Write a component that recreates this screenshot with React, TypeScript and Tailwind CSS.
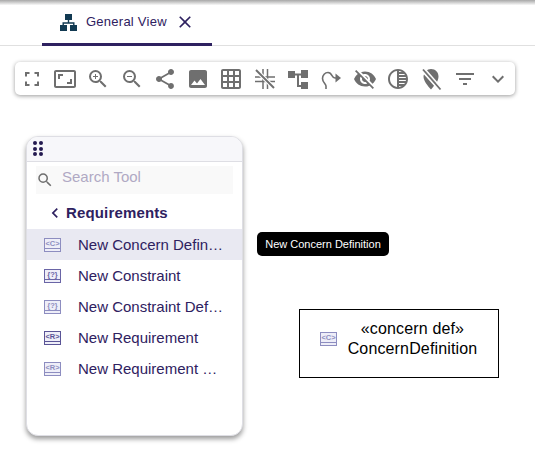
import React from 'react';
import {
  MdAspectRatio, MdZoomIn, MdZoomOut, MdShare, MdImage, MdGridOn, MdVisibilityOff, MdTonality,
  MdExpandMore, MdSearch, MdChevronLeft, MdClose, MdFilterList,
} from 'react-icons/md';

const iconClass = 'w-6 h-6 text-[#6f6f6f]';

function CornersIcon() {
  return (
    <svg viewBox="0 0 24 24" className={iconClass} fill="none" stroke="currentColor" strokeWidth="2">
      <path d="M6 9.500V6h3.500M14.500 6H18v3.500M18 14.500V18h-3.500M9.500 18H6v-3.500" />
    </svg>
  );
}

function ArrangeIcon() {
  return (
    <svg viewBox="0 0 24 24" className={iconClass} fill="none" stroke="currentColor" strokeWidth="1.500">
      <path d="M10 2v20M14.500 2v20M2 10h20M2 14.500h20" />
      <path d="M3 3l18 18" stroke="white" strokeWidth="4" />
      <path d="M3 3l18 18" strokeWidth="2" />
    </svg>
  );
}

function TreeIcon() {
  return (
    <svg viewBox="0 0 24 24" className={iconClass} fill="currentColor">
      <path d="M2 4h7v7H2zM15 3h7v8h-7zM15 15h7v7h-7zM9 6.500h6v2H9zM11 8h2v10h2v2h-4z" />
    </svg>
  );
}

function RouteIcon() {
  return (
    <svg viewBox="0 0 24 24" className={iconClass} fill="none" stroke="currentColor" strokeWidth="1.600">
      <path d="M7 22v-3c0-2-3.500-3.500-3.500-7.500C3.500 8 6 5.500 9 5.500c4.500 0 3.500 5.500 7 5.500h2" />
      <path d="M16.500 6.500L22 11l-5.500 4.500z" fill="currentColor" stroke="none" />
    </svg>
  );
}

function PinOffIcon() {
  return (
    <svg viewBox="0 0 24 24" className={iconClass} fill="currentColor">
      <path d="M12 2c4.500 0 7.500 3.200 7.500 7.500 0 2.500-1 4.800-2.300 6.800L7 4.200C8.300 2.800 10 2 12 2zM5 7.500l10 11.200c-1 1.300-2 2.500-3 3.800-3.500-4-7.500-8.500-7.500-13 0-.7.200-1.400.500-2z" />
      <path d="M5.500 1.500l17.500 20" stroke="white" strokeWidth="1.500" />
      <path d="M4 2.500l17.500 20" stroke="currentColor" strokeWidth="1.800" />
    </svg>
  );
}

function SitemapIcon() {
  return (
    <svg viewBox="0 0 17 17" className="w-[17px] h-[17px] shrink-0 text-[#123a52]" fill="currentColor">
      <path d="M5 0h7v6H5zM0 11h7v6H0zM10 11h7v6h-7zM7.800 6h1.400v2.300H14.500V11h-1.400V9.700H3.900V11H2.500V8.300h5.300z" />
    </svg>
  );
}

function ElementIcon({ label, className }: { label: string; className: string }) {
  return (
    <svg viewBox="0 0 17 14" className={`w-[17px] h-[14px] shrink-0 ${className}`} fill="none">
      <rect x="0.500" y="0.500" width="16" height="13" fill="#eeeef8" stroke="currentColor" />
      <path d="M1 10.500h15" stroke="currentColor" />
      <text x="8.500" y="8" fontSize="7.500" fontWeight="700" textAnchor="middle" fill="currentColor" fontFamily="Liberation Sans, sans-serif">
        {label}
      </text>
    </svg>
  );
}

const toolbarIcons = [
  <CornersIcon />,
  <MdAspectRatio className={iconClass} />,
  <MdZoomIn className={iconClass} />,
  <MdZoomOut className={iconClass} />,
  <MdShare className={iconClass} />,
  <MdImage className={iconClass} />,
  <MdGridOn className={iconClass} />,
  <ArrangeIcon />,
  <TreeIcon />,
  <RouteIcon />,
  <MdVisibilityOff className={iconClass} />,
  <MdTonality className={iconClass} />,
  <PinOffIcon />,
  <MdFilterList className={iconClass} />,
  <MdExpandMore className={iconClass} />,
];

const tools = [
  { label: 'New Concern Definition', icon: '<C>', tone: 'text-[#8d8dc0]', active: true },
  { label: 'New Constraint', icon: '{?}', tone: 'text-[#6a65a6]', active: false },
  { label: 'New Constraint Definition', icon: '{?}', tone: 'text-[#8d8dc0]', active: false },
  { label: 'New Requirement', icon: '<R>', tone: 'text-[#5a5496]', active: false },
  { label: 'New Requirement Definition', icon: '<R>', tone: 'text-[#8d8dc0]', active: false },
];

export default function App() {
  return (
    <div className="relative w-[535px] h-[460px] overflow-hidden bg-white font-['Liberation_Sans',sans-serif]">
      <div className="h-[46px] border-b border-[#e0e0e0] bg-gradient-to-b from-[#a8a8a8] via-white via-[12%] to-white pl-[42px]">
        <div className="w-[170px] h-[46px] border-b-[3px] border-[#2e2160] flex items-center pl-[18px] pt-[1px]">
          <SitemapIcon />
          <span className="ml-[9px] text-[13px] tracking-[0.25px] text-[#2e2160]">General View</span>
          <MdClose className="ml-[8px] w-[20px] h-[20px] text-[#2e2160]" />
        </div>
      </div>

      <div className="mt-[16px] ml-[15px] w-[500px] h-[33px] bg-white rounded-[5px] shadow-[0_1px_4px_rgba(0,0,0,0.4)] flex items-center">
        {toolbarIcons.map((icon, i) => (
          <div key={i} className="w-[33.300px] shrink-0 flex justify-center">{icon}</div>
        ))}
      </div>

      <div className="absolute left-[26px] top-[136px] w-[217px] h-[300px] bg-white rounded-[12px] border border-[#dedee4] shadow-[0_3px_5px_rgba(0,0,0,0.4)] overflow-hidden">
        <div className="h-[25px] bg-[#f7f7fa] border-b border-[#dedee4] pl-[6px] pt-[4px]">
          <div className="grid grid-cols-2 w-[10px] gap-x-[2px] gap-y-[1.500px]">
            {[0, 1, 2, 3, 4, 5].map((d) => (
              <div key={d} className="w-[4px] h-[4px] rounded-full bg-[#241a50]" />
            ))}
          </div>
        </div>
        <div className="mx-[9px] mt-[4px] h-[28px] bg-[#f9f9f9] flex items-center">
          <MdSearch className="w-[18px] h-[18px] text-[#6f6f6f]" />
          <span className="ml-[8px] text-[15px] text-[#b0a9c4] pb-[5px]">Search Tool</span>
        </div>
        <div className="h-[35px] flex items-center pl-[18px] pt-[3px]">
          <MdChevronLeft className="w-[20px] h-[20px] text-[#2e2160]" />
          <span className="ml-[1px] text-[15px] font-bold tracking-[0.15px] text-[#2e2160]">Requirements</span>
        </div>
        {tools.map((tool) => (
          <div key={tool.label} className={`h-[31px] flex items-center pl-[17px] ${tool.active ? 'bg-[#e9e9f2]' : ''}`}>
            <ElementIcon label={tool.icon} className={tool.tone} />
            <span className="ml-[17px] w-[147px] pt-[2px] truncate text-[15px] text-[#2e2160]">{tool.label}</span>
          </div>
        ))}
      </div>

      <div className="absolute left-[257px] top-[232px] w-[132px] h-[24px] bg-black rounded-[5px] flex items-center justify-center text-[11px] text-white">
        New Concern Definition
      </div>

      <div className="absolute left-[299px] top-[309px] w-[200px] h-[69px] border border-black bg-white flex items-center pl-[20px] pb-[10px]">
        <ElementIcon label="<C>" className="text-[#8d8dc0]" />
        <div className="ml-[10px] w-[131px] text-center text-[16px] tracking-[0.15px] leading-[20px] text-black">
          <div>«concern def»</div>
          <div>ConcernDefinition</div>
        </div>
      </div>
    </div>
  );
}
